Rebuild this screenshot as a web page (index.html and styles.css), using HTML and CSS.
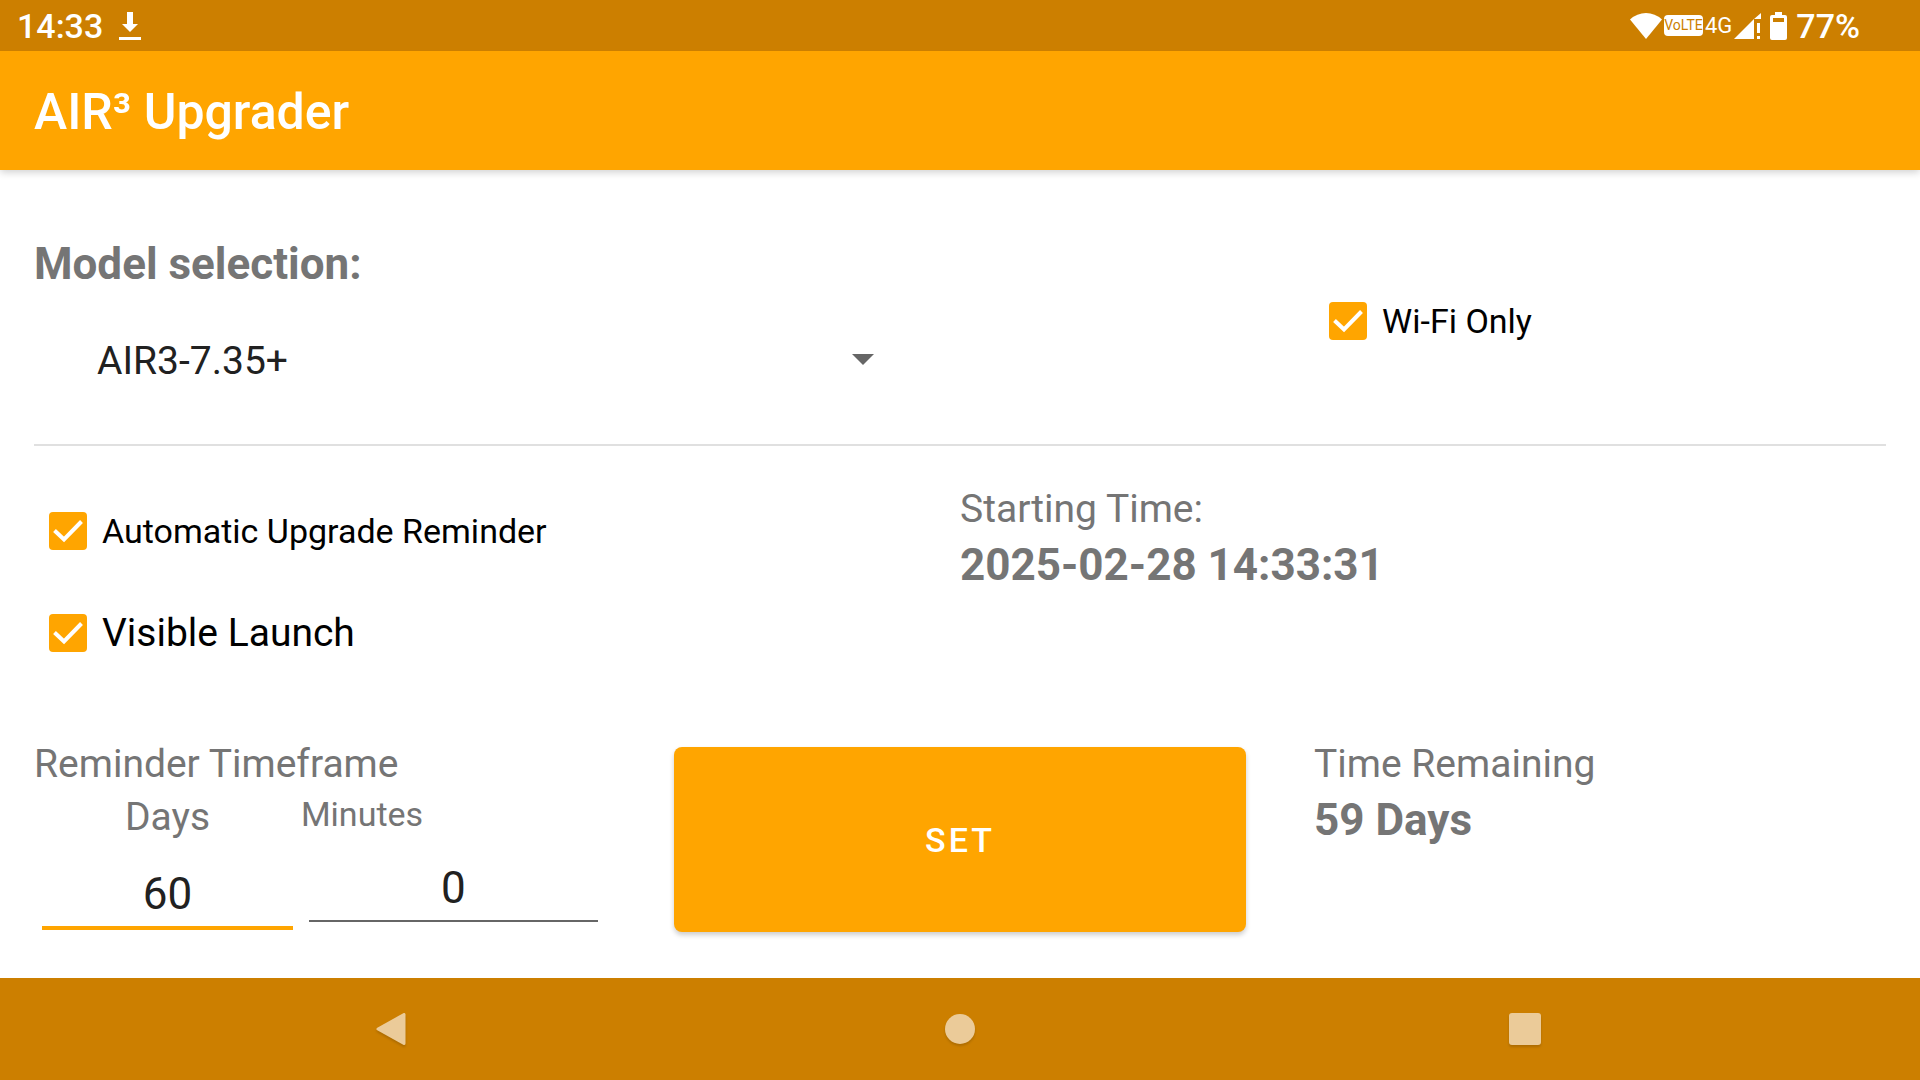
FILE: index.html
```html
<!DOCTYPE html>
<html lang="en">
<head>
    <meta charset="UTF-8">
    <meta name="viewport" content="width=device-width, initial-scale=1.0">
    <title>AIR³ Upgrader</title>
    <link rel="stylesheet" href="styles.css">
</head>
<body>
    <div class="status-bar">
        <span>14:33</span>
        <svg class="download-icon" width="22" height="28" viewBox="0 0 22 28" fill="#fff">
            <path d="M8 0h6v12h5l-8 8-8-8h5zM0 25h22v3H0z"/>
        </svg>
        <div class="status-right">
            <svg width="32" height="26" viewBox="0 0 32 26" fill="#fff">
                <path d="M16 26L0 6.500Q7 0 16 0T32 6.500z"/>
            </svg>
            <span class="volte">VoLTE</span>
            <span class="network">4G</span>
            <svg class="signal-icon" width="27" height="26" viewBox="0 0 27 26" fill="#fff">
                <path d="M0 26L20 6v20zM20 6L27 0v6zM23 10h3v10h-3zM23 23h3v3h-3z"/>
            </svg>
            <svg class="battery-icon" width="17" height="28" viewBox="0 0 17 28" fill="#fff">
                <path fill-rule="evenodd" d="M5 0h7v3h3q2 0 2 2v21q0 2-2 2H2q-2 0-2-2V5q0-2 2-2h3zM3 6v4h11V6z"/>
            </svg>
            <span>77%</span>
        </div>
    </div>
    <header class="app-bar">
        <h1>AIR³ Upgrader</h1>
    </header>
    <main class="main">
        <div class="model-row">
            <div class="model">
                <label class="bold" for="model">Model selection:</label>
                <select id="model">
                    <option>AIR3-7.35+</option>
                </select>
            </div>
            <label class="check small"><input type="checkbox" checked>Wi-Fi Only</label>
        </div>
        <hr>
        <div class="reminder-row">
            <div class="checks">
                <label class="check small"><input type="checkbox" checked>Automatic Upgrade Reminder</label>
                <label class="check"><input type="checkbox" checked>Visible Launch</label>
            </div>
            <div class="info">
                <div>Starting Time:</div>
                <div class="bold">2025-02-28 14:33:31</div>
            </div>
        </div>
        <div class="timeframe-row">
            <div class="info">
                <div>Reminder Timeframe</div>
                <div class="fields">
                    <div class="field days">
                        <label for="days">Days</label>
                        <input type="text" inputmode="numeric" id="days" value="60">
                    </div>
                    <div class="field">
                        <label class="small" for="minutes">Minutes</label>
                        <input type="text" inputmode="numeric" id="minutes" value="0">
                    </div>
                </div>
            </div>
            <button class="set-btn" type="button">SET</button>
            <div class="info">
                <div>Time Remaining</div>
                <div class="bold">59 Days</div>
            </div>
        </div>
    </main>
    <nav class="nav-bar">
        <button type="button" aria-label="Back">
            <svg width="38" height="38" viewBox="0 0 38 38">
                <path d="M28 4.500v29L2 19z" stroke-width="3" stroke-linejoin="round"/>
            </svg>
        </button>
        <button type="button" aria-label="Home">
            <svg width="38" height="38" viewBox="0 0 38 38">
                <circle cx="19" cy="19" r="15"/>
            </svg>
        </button>
        <button type="button" aria-label="Overview">
            <svg width="38" height="38" viewBox="0 0 38 38">
                <rect x="3" y="3" width="32" height="32" rx="3"/>
            </svg>
        </button>
    </nav>
</body>
</html>
```
FILE: styles.css
```css
* {
    box-sizing: border-box;
}
body {
    font-family: Roboto, sans-serif;
    font-size: 39px;
    line-height: 46px;
    margin: 0;
    min-height: 100vh;
    display: flex;
    flex-direction: column;
    background: white;
    color: #757575;
}
input, select, button {
    font-family: inherit;
    margin: 0;
}
.status-bar {
    position: relative;
    z-index: 1;
    display: flex;
    align-items: center;
    height: 51px;
    padding: 0 60px 0 17px;
    background: #cc7f00;
    color: white;
    font-size: 34px;
    font-weight: 500;
}
.download-icon {
    margin-left: 16px;
}
.status-right {
    display: flex;
    align-items: center;
    gap: 2px;
    margin-left: auto;
}
.volte {
    width: 39px;
    background: white;
    border-radius: 4px;
    color: #cc7f00;
    font-size: 14px;
    font-weight: 400;
    line-height: 21px;
    text-align: center;
}
.network {
    font-size: 22px;
    font-weight: 400;
}
.battery-icon {
    margin: 0 7px;
}
.app-bar {
    position: relative;
    display: flex;
    align-items: center;
    height: 119px;
    padding: 2px 34px 0;
    background: #ffa500;
    color: white;
    box-shadow: 0 2px 8px rgba(0, 0, 0, 0.2);
}
.app-bar h1 {
    margin: 0;
    font-size: 50px;
    font-weight: 500;
}
.main {
    flex: 1;
    padding: 68px 34px 46px;
}
.bold {
    font-size: 44px;
    font-weight: 700;
    line-height: 52px;
}
.small {
    font-size: 34px;
    line-height: 40px;
}
.model-row, .reminder-row {
    display: grid;
    grid-template-columns: 1fr 1fr;
}
.model-row {
    justify-items: center;
    align-items: center;
}
.model {
    display: flex;
    flex-direction: column;
    width: 100%;
}
.model select {
    appearance: none;
    height: 114px;
    padding: 28px 120px 0 63px;
    border: none;
    background: url("data:image/svg+xml,%3Csvg xmlns='http://www.w3.org/2000/svg' width='22' height='11'%3E%3Cpath d='M0 0h22L11 11z' fill='%23666'/%3E%3C/svg%3E") no-repeat right 86px top 64px;
    color: #212121;
    font-size: 39px;
}
hr {
    height: 2px;
    margin: 40px 0 34px;
    border: none;
    background: #e0e0e0;
}
.check {
    display: flex;
    align-items: center;
    gap: 15px;
    height: 102px;
    padding-left: 15px;
    color: black;
}
.check input {
    appearance: none;
    width: 38px;
    height: 38px;
    border: 4px solid #757575;
    border-radius: 4px;
}
.check input:checked {
    border: none;
    background: #ffa500 url("data:image/svg+xml,%3Csvg xmlns='http://www.w3.org/2000/svg' width='38' height='38'%3E%3Cpath d='M5.500 18.500l9.500 9 17.500-18' fill='none' stroke='white' stroke-width='4'/%3E%3C/svg%3E");
}
.info {
    display: flex;
    flex-direction: column;
    gap: 7px;
}
.reminder-row .info {
    padding-top: 6px;
}
.timeframe-row {
    display: grid;
    grid-template-columns: repeat(3, minmax(0, 1fr));
    gap: 68px;
    margin-top: 57px;
}
.fields {
    display: grid;
    grid-template-columns: minmax(0, 7fr) minmax(0, 8fr);
}
.field {
    display: flex;
    flex-direction: column;
}
.field input {
    min-width: 0;
    margin: 0 8px;
    padding: 28px 0 6px;
    border: none;
    border-bottom: 2px solid #666;
    outline: none;
    background: none;
    color: #212121;
    font-size: 44px;
    line-height: 52px;
    text-align: center;
}
.days label {
    text-align: center;
}
.days input {
    border-bottom: 4px solid #ffa500;
}
.set-btn {
    height: 185px;
    margin-top: 6px;
    border: none;
    border-radius: 8px;
    background: #ffa500;
    box-shadow: 0 3px 5px rgba(0, 0, 0, 0.2);
    color: white;
    font-size: 34px;
    font-weight: 500;
    letter-spacing: 3px;
}
.nav-bar {
    display: flex;
    height: 102px;
    padding: 0 112px;
    background: #cc7f00;
}
.nav-bar button {
    flex: 1;
    border: none;
    background: none;
}
.nav-bar svg {
    display: block;
    margin: 0 auto;
    fill: #ebcb99;
    stroke: #ebcb99;
    stroke-width: 0;
    filter: drop-shadow(0 2px 1px rgba(0, 0, 0, 0.15));
}
```
